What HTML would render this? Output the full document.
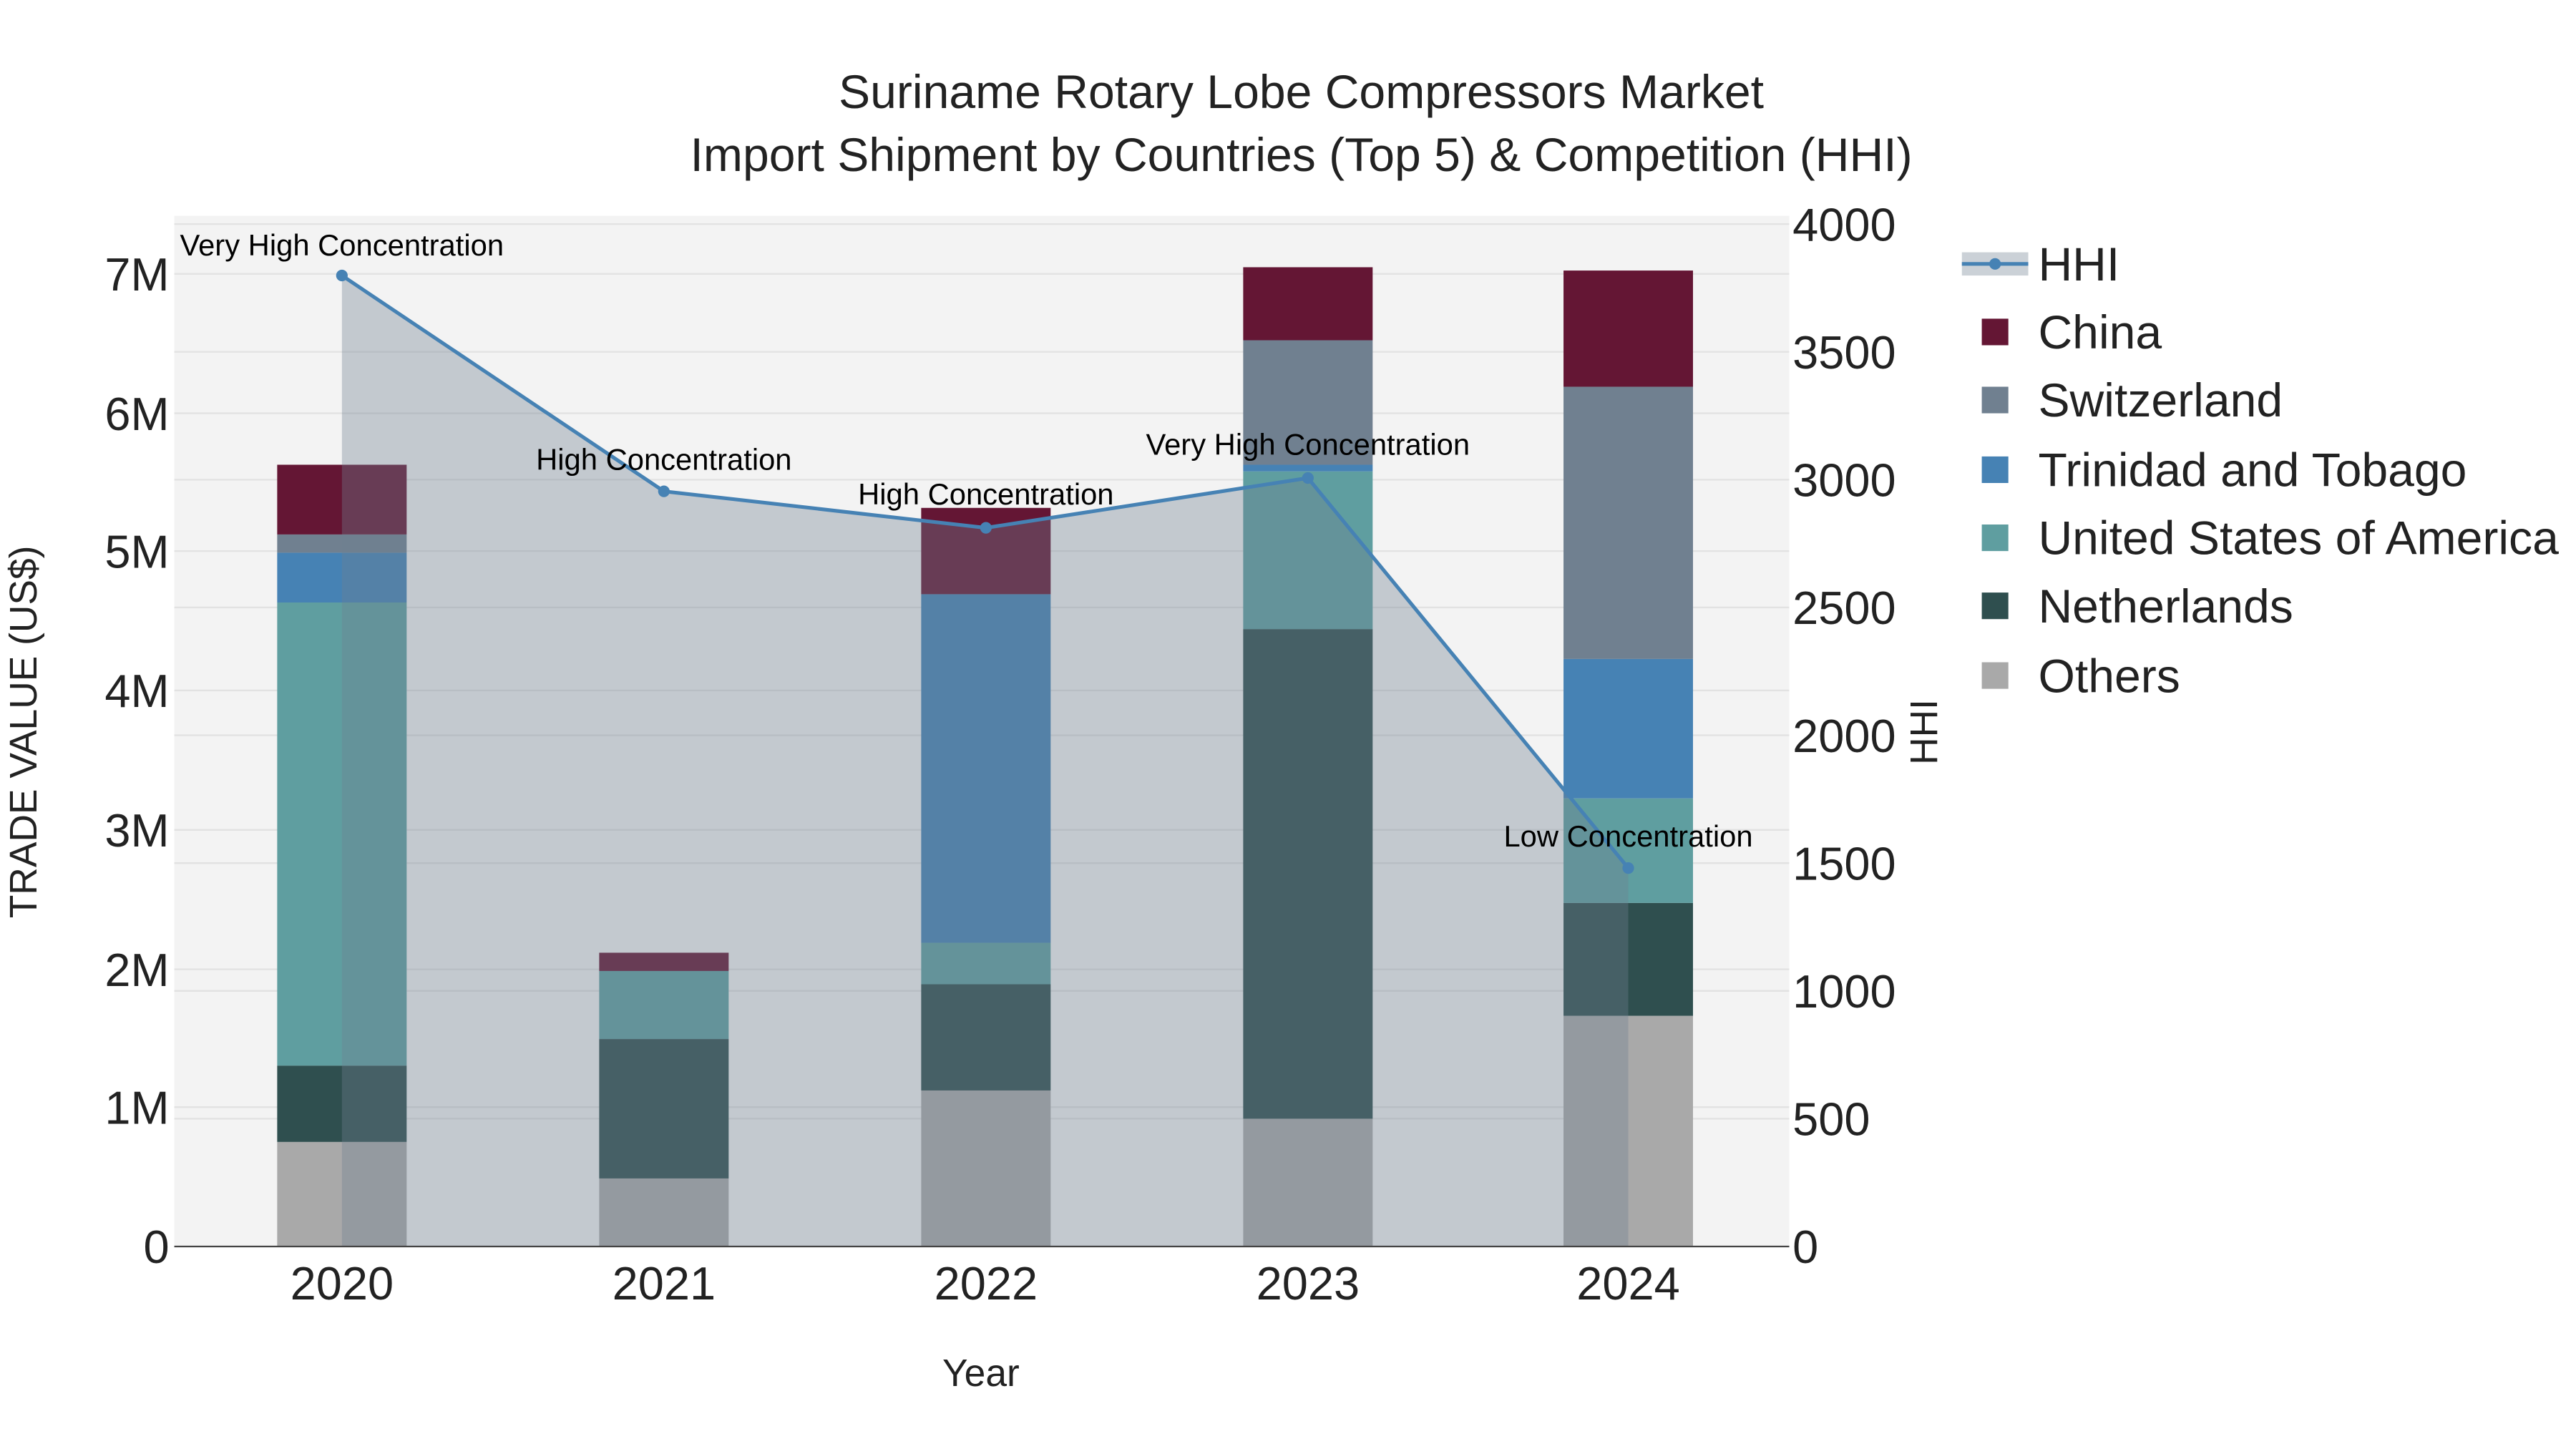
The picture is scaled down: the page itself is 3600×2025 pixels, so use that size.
<!DOCTYPE html>
<html><head><meta charset="utf-8"><style>html,body{margin:0;padding:0;background:#fff}svg{display:block}text{font-family:"Liberation Sans",sans-serif}</style></head>
<body>
<svg width="3600" height="2025" viewBox="0 0 1552 873" xmlns="http://www.w3.org/2000/svg">
<rect x="0" y="0" width="1552" height="873" fill="#fff"/>
<rect x="105" y="130" width="973" height="621" fill="#f3f3f3"/>
<g stroke="#e2e2e2" stroke-width="1">
<line x1="105" x2="1078" y1="667" y2="667"/><line x1="105" x2="1078" y1="584" y2="584"/><line x1="105" x2="1078" y1="500" y2="500"/><line x1="105" x2="1078" y1="416" y2="416"/><line x1="105" x2="1078" y1="332" y2="332"/><line x1="105" x2="1078" y1="249" y2="249"/><line x1="105" x2="1078" y1="165" y2="165"/>
<line x1="105" x2="1078" y1="674" y2="674"/><line x1="105" x2="1078" y1="597" y2="597"/><line x1="105" x2="1078" y1="520" y2="520"/><line x1="105" x2="1078" y1="443" y2="443"/><line x1="105" x2="1078" y1="366" y2="366"/><line x1="105" x2="1078" y1="289" y2="289"/><line x1="105" x2="1078" y1="212" y2="212"/><line x1="105" x2="1078" y1="135" y2="135"/>
</g>
<g>
<rect x="167" y="688" width="78" height="63" fill="#A9A9A9"/><rect x="167" y="642" width="78" height="46" fill="#2F4F4F"/><rect x="167" y="363" width="78" height="279" fill="#5F9EA0"/><rect x="167" y="333" width="78" height="30" fill="#4682B4"/><rect x="167" y="322" width="78" height="11" fill="#708090"/><rect x="167" y="280" width="78" height="42" fill="#641634"/>
<rect x="361" y="710" width="78" height="41" fill="#A9A9A9"/><rect x="361" y="626" width="78" height="84" fill="#2F4F4F"/><rect x="361" y="585" width="78" height="41" fill="#5F9EA0"/><rect x="361" y="574" width="78" height="11" fill="#641634"/>
<rect x="555" y="657" width="78" height="94" fill="#A9A9A9"/><rect x="555" y="593" width="78" height="64" fill="#2F4F4F"/><rect x="555" y="568" width="78" height="25" fill="#5F9EA0"/><rect x="555" y="358" width="78" height="210" fill="#4682B4"/><rect x="555" y="306" width="78" height="52" fill="#641634"/>
<rect x="749" y="674" width="78" height="77" fill="#A9A9A9"/><rect x="749" y="379" width="78" height="295" fill="#2F4F4F"/><rect x="749" y="284" width="78" height="95" fill="#5F9EA0"/><rect x="749" y="280" width="78" height="4" fill="#4682B4"/><rect x="749" y="205" width="78" height="75" fill="#708090"/><rect x="749" y="161" width="78" height="44" fill="#641634"/>
<rect x="942" y="612" width="78" height="139" fill="#A9A9A9"/><rect x="942" y="544" width="78" height="68" fill="#2F4F4F"/><rect x="942" y="481" width="78" height="63" fill="#5F9EA0"/><rect x="942" y="397" width="78" height="84" fill="#4682B4"/><rect x="942" y="233" width="78" height="164" fill="#708090"/><rect x="942" y="163" width="78" height="70" fill="#641634"/>
</g>
<polygon points="206,751 206,166 400,296 594,318 788,288 981,523 981,751" fill="rgba(112,128,144,0.36)"/>
<polyline points="206,166 400,296 594,318 788,288 981,523" fill="none" stroke="#4682B4" stroke-width="2.2"/>
<g fill="#4682B4"><circle cx="206" cy="166" r="3.5"/><circle cx="400" cy="296" r="3.5"/><circle cx="594" cy="318" r="3.5"/><circle cx="788" cy="288" r="3.5"/><circle cx="981" cy="523" r="3.5"/></g>
<line x1="105" x2="1078" y1="751" y2="751" stroke="#444" stroke-width="1"/>
<g font-size="18" fill="#000" text-anchor="middle">
<text x="206" y="154">Very High Concentration</text><text x="400" y="283">High Concentration</text><text x="594" y="304">High Concentration</text><text x="788" y="274">Very High Concentration</text><text x="981" y="510">Low Concentration</text>
</g>
<g font-size="28" fill="#222" text-anchor="end">
<text x="102" y="761">0</text><text x="102" y="677">1M</text><text x="102" y="594">2M</text><text x="102" y="510">3M</text><text x="102" y="426">4M</text><text x="102" y="342">5M</text><text x="102" y="259">6M</text><text x="102" y="175">7M</text>
</g>
<g font-size="28" fill="#222" text-anchor="start">
<text x="1080" y="761">0</text><text x="1080" y="684">500</text><text x="1080" y="607">1000</text><text x="1080" y="530">1500</text><text x="1080" y="453">2000</text><text x="1080" y="376">2500</text><text x="1080" y="299">3000</text><text x="1080" y="222">3500</text><text x="1080" y="145">4000</text>
</g>
<g font-size="28" fill="#222" text-anchor="middle">
<text x="206" y="783">2020</text><text x="400" y="783">2021</text><text x="594" y="783">2022</text><text x="788" y="783">2023</text><text x="981" y="783">2024</text>
</g>
<text x="591" y="835" font-size="23" fill="#222" text-anchor="middle">Year</text>
<text transform="translate(22,441) rotate(-90)" font-size="23" fill="#222" text-anchor="middle">TRADE VALUE (US$)</text>
<text transform="translate(1167,441) rotate(-90)" font-size="23" fill="#222" text-anchor="middle">HHI</text>
<text x="784" y="65" font-size="28.5" fill="#222" text-anchor="middle">Suriname Rotary Lobe Compressors Market</text>
<text x="784" y="103" font-size="28.5" fill="#222" text-anchor="middle">Import Shipment by Countries (Top 5) &amp; Competition (HHI)</text>
<rect x="1182" y="152" width="40" height="14" fill="rgba(112,128,144,0.36)"/>
<line x1="1182" x2="1222" y1="159" y2="159" stroke="#4682B4" stroke-width="2.2"/><circle cx="1202" cy="159" r="3.5" fill="#4682B4"/>
<rect x="1194" y="192" width="16" height="16" fill="#641634"/>
<rect x="1194" y="233" width="16" height="16" fill="#708090"/>
<rect x="1194" y="275" width="16" height="16" fill="#4682B4"/>
<rect x="1194" y="316" width="16" height="16" fill="#5F9EA0"/>
<rect x="1194" y="357" width="16" height="16" fill="#2F4F4F"/>
<rect x="1194" y="399" width="16" height="16" fill="#A9A9A9"/>
<g font-size="28.5" fill="#222">
<text x="1228" y="169">HHI</text><text x="1228" y="210">China</text><text x="1228" y="251">Switzerland</text><text x="1228" y="293">Trinidad and Tobago</text><text x="1228" y="334">United States of America</text><text x="1228" y="375">Netherlands</text><text x="1228" y="417">Others</text>
</g>
</svg>
</body></html>
